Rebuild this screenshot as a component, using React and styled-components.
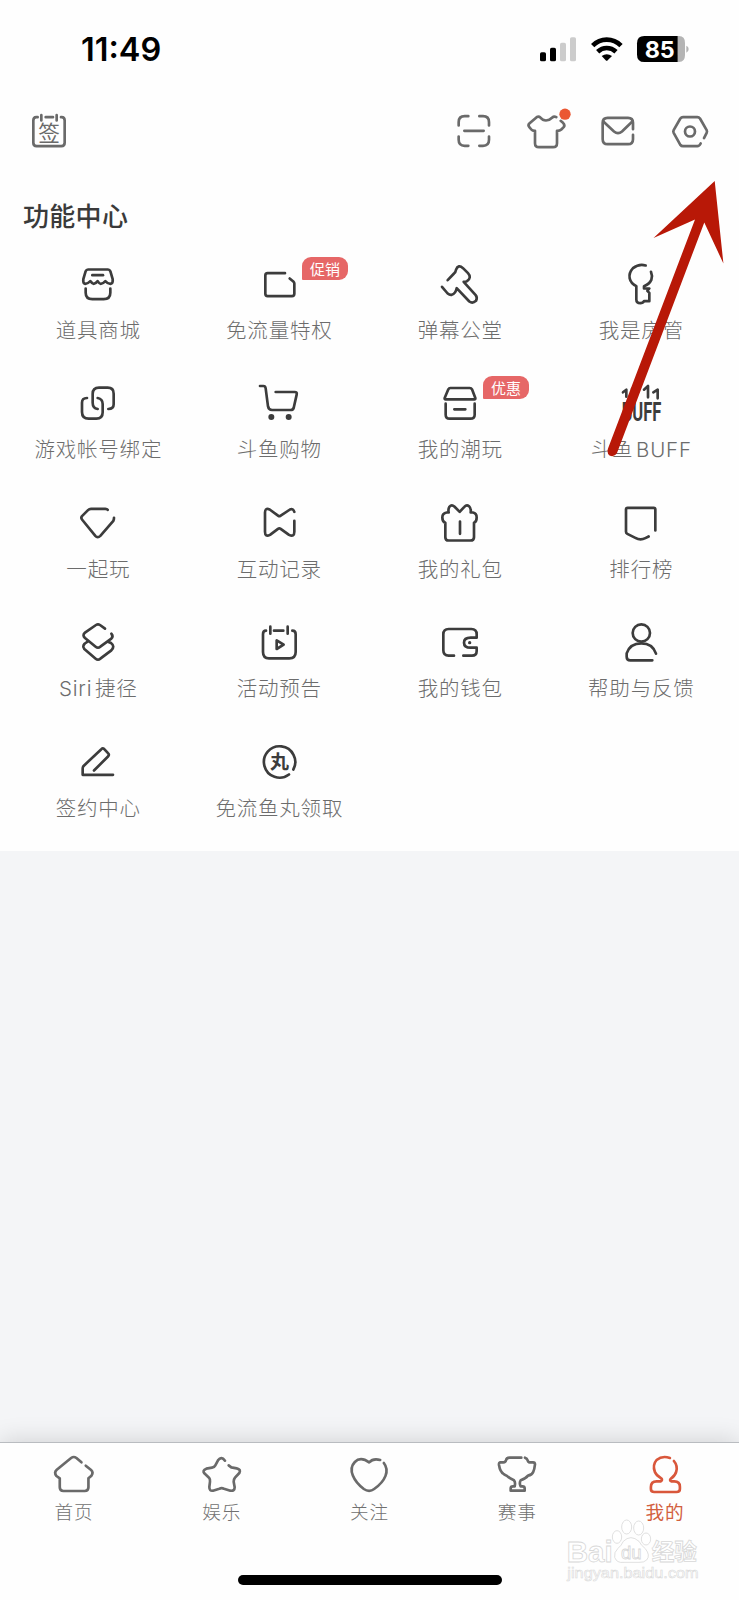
import React from 'react'
import styled, { createGlobalStyle } from 'styled-components'

const GlobalStyle = createGlobalStyle`
* {
    box-sizing: border-box;
}
body {
    margin: 0;
    background-color: #ffffff;
    font-family: 'Noto Sans CJK SC', 'Noto Sans', sans-serif;
}
`;
const Screen = styled.div`
position: relative;
display: flex;
flex-direction: column;
width: 739px;
height: 1600px;
overflow: hidden;
background-color: #f4f5f7;
`;
const Panel = styled.main`
height: 851px;
background-color: #fefefe;
`;
const StatusBar = styled.div`
display: flex;
align-items: center;
justify-content: space-between;
height: 98px;
padding: 0 49px 0 81px;
`;
const Clock = styled.span`
padding-top: 2px;
font-family: Inter, sans-serif;
font-size: 32.5px;
font-weight: 600;
line-height: 40px;
color: #000000;
`;
const StatusIcons = styled.div`
display: flex;
align-items: center;
gap: 14px;
`;
const Toolbar = styled.header`
display: flex;
align-items: center;
justify-content: space-between;
height: 65px;
padding: 0 25px 0 24.5px;
`;
const ToolGroup = styled.div`
display: flex;
gap: 24px;
`;
const IconSvg = styled.svg`
display: block;
flex: none;
width: 48px;
height: 48px;
overflow: visible;
fill: none;
stroke: ${props => props.$color};
stroke-width: ${props => props.$weight || 8};
stroke-linecap: round;
stroke-linejoin: round;

.solid {
    fill: ${props => props.$color};
    stroke: none;
}
text {
    fill: ${props => props.$color};
    stroke: none;
}
`;
const Title = styled.h1`
height: 97px;
margin: 0;
padding: 32px 0 0 23px;
font-size: 26px;
font-weight: 500;
line-height: 40px;
letter-spacing: .3px;
color: #3a3a3a;
`;
const Grid = styled.section`
display: grid;
grid-template-columns: repeat(4, 181px);
grid-auto-rows: 86px;
row-gap: 33.4px;
justify-content: center;
`;
const Cell = styled.div`
position: relative;
display: flex;
flex-direction: column;
align-items: center;
`;
const CellLabel = styled.span`
margin-top: 8px;
padding-left: .6px;
font-family: Inter, 'Noto Sans CJK SC', sans-serif;
font-size: 20.5px;
font-weight: 300;
line-height: 30px;
letter-spacing: .8px;
white-space: nowrap;
color: #6c6c6c;
`;
const Badge = styled.span`
position: absolute;
top: -3px;
left: 113.5px;
width: 46px;
height: 23px;
border-radius: 9px 9px 9px 1px;
background-color: #e66767;
color: #ffffff;
font-size: 15px;
line-height: 23px;
text-align: center;
`;
const TabBar = styled.nav`
display: flex;
height: 158px;
margin-top: auto;
padding-top: 7px;
border-top: 1px solid #b9bcc0;
background-color: #fefefe;
box-shadow: 0 -3px 22px rgba(0, 0, 0, .13);
`;
const Tab = styled.div`
display: flex;
flex: 1;
flex-direction: column;
align-items: center;
`;
const TabLabel = styled.span`
margin-top: -1px;
font-size: 18.6px;
font-weight: ${props => props.$active ? 400 : 300};
line-height: 28px;
letter-spacing: .9px;
color: ${props => props.$active ? '#d2603f' : '#707070'};
`;
const HomeIndicator = styled.div`
position: absolute;
bottom: 15px;
left: 238px;
width: 264px;
height: 10px;
border-radius: 5px;
background-color: #000000;
`;
const Pointer = styled.svg`
position: absolute;
top: 175px;
left: 600px;
fill: #b81807;
`;
const Watermark = styled.svg`
position: absolute;
top: 1510px;
left: 560px;
fill: #ffffff;
stroke: #d8d8d8;
stroke-width: 2.4;
font-family: 'Liberation Sans', sans-serif;
`;

const GREY = '#6a6a6a'
const DARK = '#3c3c3c'
const ORANGE = '#d9573b'

// every glyph is drawn in a 144 unit box, three units to the pixel
const Icon = ({origin, color, weight, children}) => {
    return <IconSvg viewBox = {`${origin} 144 144`} $color = {color} $weight = {weight}>{children}</IconSvg>
}

const features = [
    {label: '道具商城', origin: '222 58.5', art: <>
        <path d="M264 87H324Q329 87 331 92L338 116Q340 128 331 130Q323 130 316 122Q309 130 302 130Q298 130 293 122Q287 130 281 130Q277 130 271 122Q263 130 256 130Q248 128 250 116L257 92Q259 87 264 87Z"/>
        <path d="M277 104H309"/>
        <path d="M257 144V157Q257 176 277 176H311Q331 176 331 157V144"/>
    </>},
    {label: '免流量特权', origin: '765 58.5', badge: '促销', art: <>
        <path d="M855 98H803Q796 98 796 105V160Q796 167 803 167H876Q883 167 883 160V129Q883 126 880 123L869 114"/>
    </>},
    {label: '弹幕公堂', origin: '198 58.5', art: <>
        <path d="M233 119L252 99Q257 95 258 88Q265 70 279 83L294 98Q306 111 291 122Q286 125 281 124L317 164Q323 171 318 181Q308 190 298 183L260 143Q257 159 245 163Q239 164 233 159L216 139"/>
    </>},
    {label: '我是房管', origin: '741 58.5', art: <>
        <path d="M827 75Q807 69 789 83Q776 97 779 113Q782 128 799 137V177Q799 188 811 188Q819 188 822 182H838V157L832 151L838 144H822V137Q838 131 844 118Q848 105 843 94"/>
    </>},
    {label: '游戏帐号绑定', origin: '222 417', art: <>
        <path d="M261 474Q246 474 246 488V516Q246 536 266 536H289Q308 536 308 517V492Q308 477 293 474"/>
        <path d="M325 507Q341 507 341 493V461Q341 443 323 443H297Q278 443 278 462V488Q278 504 293 507"/>
    </>},
    {label: '斗鱼购物', origin: '765 417', art: <>
        <path d="M780 438H790Q796 438 797 445L804 499Q806 510 816 510H872Q879 510 881 504L890 464Q892 456 884 456H827"/>
        <circle className="solid" cx="814" cy="531" r="9"/>
        <circle className="solid" cx="866" cy="531" r="9"/>
    </>},
    {label: '我的潮玩', origin: '198 417', badge: '优惠', art: <>
        <path d="M241 444H299Q304 444 306 448L316 474Q317 478 313 478H227Q223 478 224 474L235 448Q237 444 241 444Z"/>
        <path d="M227 491V524Q227 536 239 536H301Q314 536 314 524V491M253 508H286"/>
    </>},
    {label: '斗鱼\u200aBUFF', origin: '741 417', art: <>
        <path d="M759 457L769 449V470"/>
        <path d="M786 447L796 438V462"/>
        <path d="M822 449L834 438V472"/>
        <path d="M850 457L863 449V475"/>
        <text x="755" y="544" fontFamily="Roboto, sans-serif" fontSize="78" fontWeight="700" textLength="119" lengthAdjust="spacingAndGlyphs">BUFF</text>
    </>},
    {label: '一起玩', origin: '222 55.5', art: <>
        <path d="M323 88Q321 85 316 85H273Q268 85 264 89L246 107Q242 112 246 117L286 166Q293 174 301 166L340 121Q342 117 342 112"/>
    </>},
    {label: '互动记录', origin: '765 55.5', art: <>
        <path d="M883 94Q879 83 870 87L841 106Q838 108 835 106L809 87Q795 81 795 96V154Q795 171 810 163L834 145Q838 142 842 145L867 163Q883 171 883 154V121"/>
    </>},
    {label: '我的礼包', origin: '198 55.5', art: <>
        <path d="M269 94L253 78Q245 71 238 79Q234 86 236 96H230Q217 98 217 111Q217 124 226 127V170Q226 180 236 180H301Q312 180 312 170V127Q320 124 320 111Q320 98 309 96H302Q304 84 297 77Q290 71 283 79L269 94ZM270 123V160"/>
    </>},
    {label: '排行榜', origin: '741 55.5', art: <>
        <path d="M856 150V87Q856 82 851 82H773Q768 82 768 87V154Q768 158 772 160L796 172Q811 181 826 173L836 168"/>
    </>},
    {label: 'Siri\u200a捷径', origin: '222 414', art: <>
        <path d="M315 446L300 435Q294 431 288 435L255 458Q246 465 255 474L287 500Q294 506 301 500L334 476Q341 469 334 461"/>
        <path d="M263 485Q243 496 253 507L287 536Q294 542 301 536L334 511Q346 499 333 489L324 485"/>
    </>},
    {label: '活动预告', origin: '765 414', art: <>
        <path d="M798 452Q789 452 789 463V516Q789 535 807 535H868Q887 535 887 516V463Q887 452 877 452M811 440V461M863 440V461M822 452H850"/>
        <path d="M830 481V507L851 494Z"/>
    </>},
    {label: '我的钱包', origin: '198 414', art: <>
        <path d="M252 527H236Q220 527 220 511V463Q220 447 236 447H304Q320 447 320 463V473H302Q282 473 282 488Q282 503 302 503H320V513Q320 527 306 527H280"/>
        <circle className="solid" cx="299" cy="488" r="5"/>
    </>},
    {label: '帮助与反馈', origin: '741 414', art: <>
        <circle cx="814" cy="459" r="26"/>
        <path d="M858 521Q848 490 814 490Q780 490 770 520V530Q770 541 781 541H847"/>
    </>},
    {label: '签约中心', origin: '222 82.5', art: <>
        <path d="M282 180L324 138Q329 133 324 128L312 115Q308 112 304 116L250 167Q248 170 248 175V193H339"/>
    </>},
    {label: '免流鱼丸领取', origin: '765 82.5', art: <>
        <path d="M867 192A47 47 0 1 1 880 177"/>
        <text x="810" y="175" fontFamily="'Noto Sans CJK SC', sans-serif" fontSize="57" fontWeight="700">丸</text>
    </>},
]

const tabs = [
    {label: '首页', origin: '149.7 91', art: <>
        <path d="M244 128L229 115Q221 109 213 115L170 150Q161 158 169 169L179 176V203Q179 214 190 214H254Q265 214 265 203V176L274 168Q281 158 273 151L257 138"/>
    </>},
    {label: '娱乐', origin: '593 91', art: <>
        <path d="M674 123Q663 108 653 122L645 137Q642 143 635 144L618 147Q605 152 612 161L626 174Q630 179 629 186L627 202Q627 215 638 213L657 207Q664 204 671 207L690 213Q703 215 703 203L700 186Q700 179 704 174L717 160Q723 149 709 146L693 143L685 137"/>
    </>},
    {label: '关注', origin: '1036.5 91', art: <>
        <path d="M1142 121Q1121 115 1109 128Q1083 110 1066 127C1044 150 1063 185 1093 208Q1109 219 1124 208C1158 184 1171 153 1153 130"/>
    </>},
    {label: '赛事', origin: '370 91', art: <>
        <path d="M455 114H420Q410 114 409 122Q408 128 401 128H393Q387 128 388 136Q391 156 402 163Q405 166 411 168Q419 176 433 182Q438 188 435 200H430Q423 200 423 206V213H465V206Q465 200 458 200H453Q448 190 453 182Q469 176 475 168Q487 166 491 156Q494 150 496 134Q496 128 490 128H480Q475 128 474 122Q472 116 466 114"/>
    </>},
    {label: '我的', active: true, origin: '813.3 91', art: <>
        <path d="M900 115Q877 107 860 121Q847 136 855 157Q859 167 874 176Q879 180 873 185H860Q843 185 843 202V208Q843 217 853 217H920Q930 217 930 208V201Q930 185 913 185H904Q897 182 904 176Q916 168 919 156Q924 138 912 124"/>
    </>},
]

const Feature = ({label, badge, origin, art}) => {
    return <Cell>
        <Icon origin = {origin} color = {DARK}>{art}</Icon>
        <CellLabel>{label}</CellLabel>
        {badge && <Badge>{badge}</Badge>}
    </Cell>
}

const Status = () => {
    return <StatusBar>
        <Clock>11:49</Clock>
        <StatusIcons>
            <svg width="37" height="26" viewBox="333 107 111 78">
                <rect x="333" y="156" width="18" height="27" rx="5"/>
                <rect x="363" y="142" width="18" height="41" rx="5"/>
                <rect x="393" y="127" width="18" height="56" rx="5" fill="#cccccc"/>
                <rect x="423" y="111" width="18" height="72" rx="5" fill="#cccccc"/>
            </svg>
            <svg width="32" height="26" viewBox="485 107 96 78">
                <g fill="none" stroke="#000000" strokeWidth="14">
                    <path d="M490 136Q508 118 532 118Q557 118 575 136"/>
                    <path d="M505 154Q517 143 532 143Q548 143 560 154"/>
                </g>
                <path d="M517 167Q532 156 548 167L535 180Q532 183 529 180Z"/>
            </svg>
            <svg width="53" height="26" viewBox="622 107 159 78" overflow="visible">
                <path d="M744 107H748Q766 107 766 128V164Q766 185 748 185H744ZM770 136Q777 138 777 146Q777 155 770 157Z" fill="#b4b4b4"/>
                <path d="M644 107H744V185H644Q622 185 622 163V129Q622 107 644 107Z"/>
                <text x="645" y="172" fill="#ffffff" fontFamily="Inter, sans-serif" fontSize="70" fontWeight="700">85</text>
            </svg>
        </StatusIcons>
    </StatusBar>
}

const Tools = () => {
    return <Toolbar>
        <Icon origin = "74 319.5" color = {GREY}>
            <path d="M108 350Q99 350 99 360V427Q99 437 109 437H183Q193 437 193 427V360Q193 350 184 350M108 350H112M136 350H158M182 350H184M123 344V360M169 344V360"/>
            <text x="114" y="422" fontFamily="'Noto Sans CJK SC', sans-serif" fontSize="65" fontWeight="400">签</text>
        </Icon>
        <ToolGroup>
            <Icon origin = "59 319.5" color = {GREY}>
                <path d="M85 375V365Q85 347 103 347H114M147 347H158Q176 347 176 365V375M176 408V418Q176 436 158 436H147M114 436H103Q85 436 85 418V408M102 391H160"/>
            </Icon>
            <Icon origin = "275 319.5" color = {GREY}>
                <path d="M378 350Q371 346 366 351Q357 360 347 360Q337 360 330 351Q325 346 319 350L297 369Q292 374 297 380L303 387Q306 391 314 391V428Q314 440 326 440H368Q380 440 380 428V391Q389 391 393 387L400 380Q405 374 398 367L391 361"/>
                <circle cx="404" cy="341" r="17" fill="#eb5732" stroke="none"/>
            </Icon>
            <Icon origin = "491 319.5" color = {GREY}>
                <path d="M608 386V367Q608 352 593 352H532Q517 352 517 367V416Q517 431 532 431H593Q608 431 608 416V403"/>
                <path d="M519 363L551 393Q563 403 575 393L606 363"/>
            </Icon>
            <Icon origin = "707 319.5" color = {GREY}>
                <path d="M821 413L829 397Q831 393 829 389L809 354Q806 350 801 350H758Q753 350 750 354L730 389Q728 393 730 397L750 433Q753 437 758 437H801Q807 437 811 429"/>
                <circle cx="779" cy="393" r="15"/>
            </Icon>
        </ToolGroup>
    </Toolbar>
}

export default function App() {
    return <>
        <GlobalStyle/>
        <Screen>
            <Panel>
                <Status/>
                <Tools/>
                <Title>功能中心</Title>
                <Grid>
                    {features.map(item => <Feature key = {item.label} {...item}/>)}
                </Grid>
            </Panel>
            <TabBar>
                {tabs.map(({label, active, origin, art}) => <Tab key = {label}>
                    <Icon origin = {origin} color = {active ? ORANGE : GREY}>{art}</Icon>
                    <TabLabel $active = {active}>{label}</TabLabel>
                </Tab>)}
            </TabBar>
            <HomeIndicator/>
            <Watermark width="150" height="80" viewBox="0 0 450 240">
                <text x="20" y="156" fontSize="90" fontWeight="700" textLength="138" lengthAdjust="spacingAndGlyphs">Bai</text>
                <ellipse cx="171" cy="81" rx="14" ry="19"/>
                <ellipse cx="200" cy="51" rx="15" ry="21"/>
                <ellipse cx="236" cy="54" rx="15" ry="21"/>
                <ellipse cx="258" cy="87" rx="14" ry="18"/>
                <path d="M190 94Q212 72 237 94Q243 106 256 116Q272 136 260 150Q252 158 237 157H192Q170 160 164 142Q161 127 174 115Q184 107 190 94Z"/>
                <text x="183" y="147" fontSize="56" textLength="62" lengthAdjust="spacingAndGlyphs">du</text>
                <text x="275" y="150" fontSize="68" fontWeight="700" fontFamily="'Noto Sans CJK SC', sans-serif">经验</text>
                <text x="22" y="203" fontSize="44" strokeWidth="1.6" textLength="394" lengthAdjust="spacingAndGlyphs">jingyan.baidu.com</text>
            </Watermark>
            <Pointer width="130" height="290" viewBox="0 0 130 290">
                <path d="M114.7 6L123.4 88.5L104.3 47.5L17 278Q14 283 9.5 280.5Q6.5 278 8 273.5L95 44.5L53.5 63Z"/>
            </Pointer>
        </Screen>
    </>
}
